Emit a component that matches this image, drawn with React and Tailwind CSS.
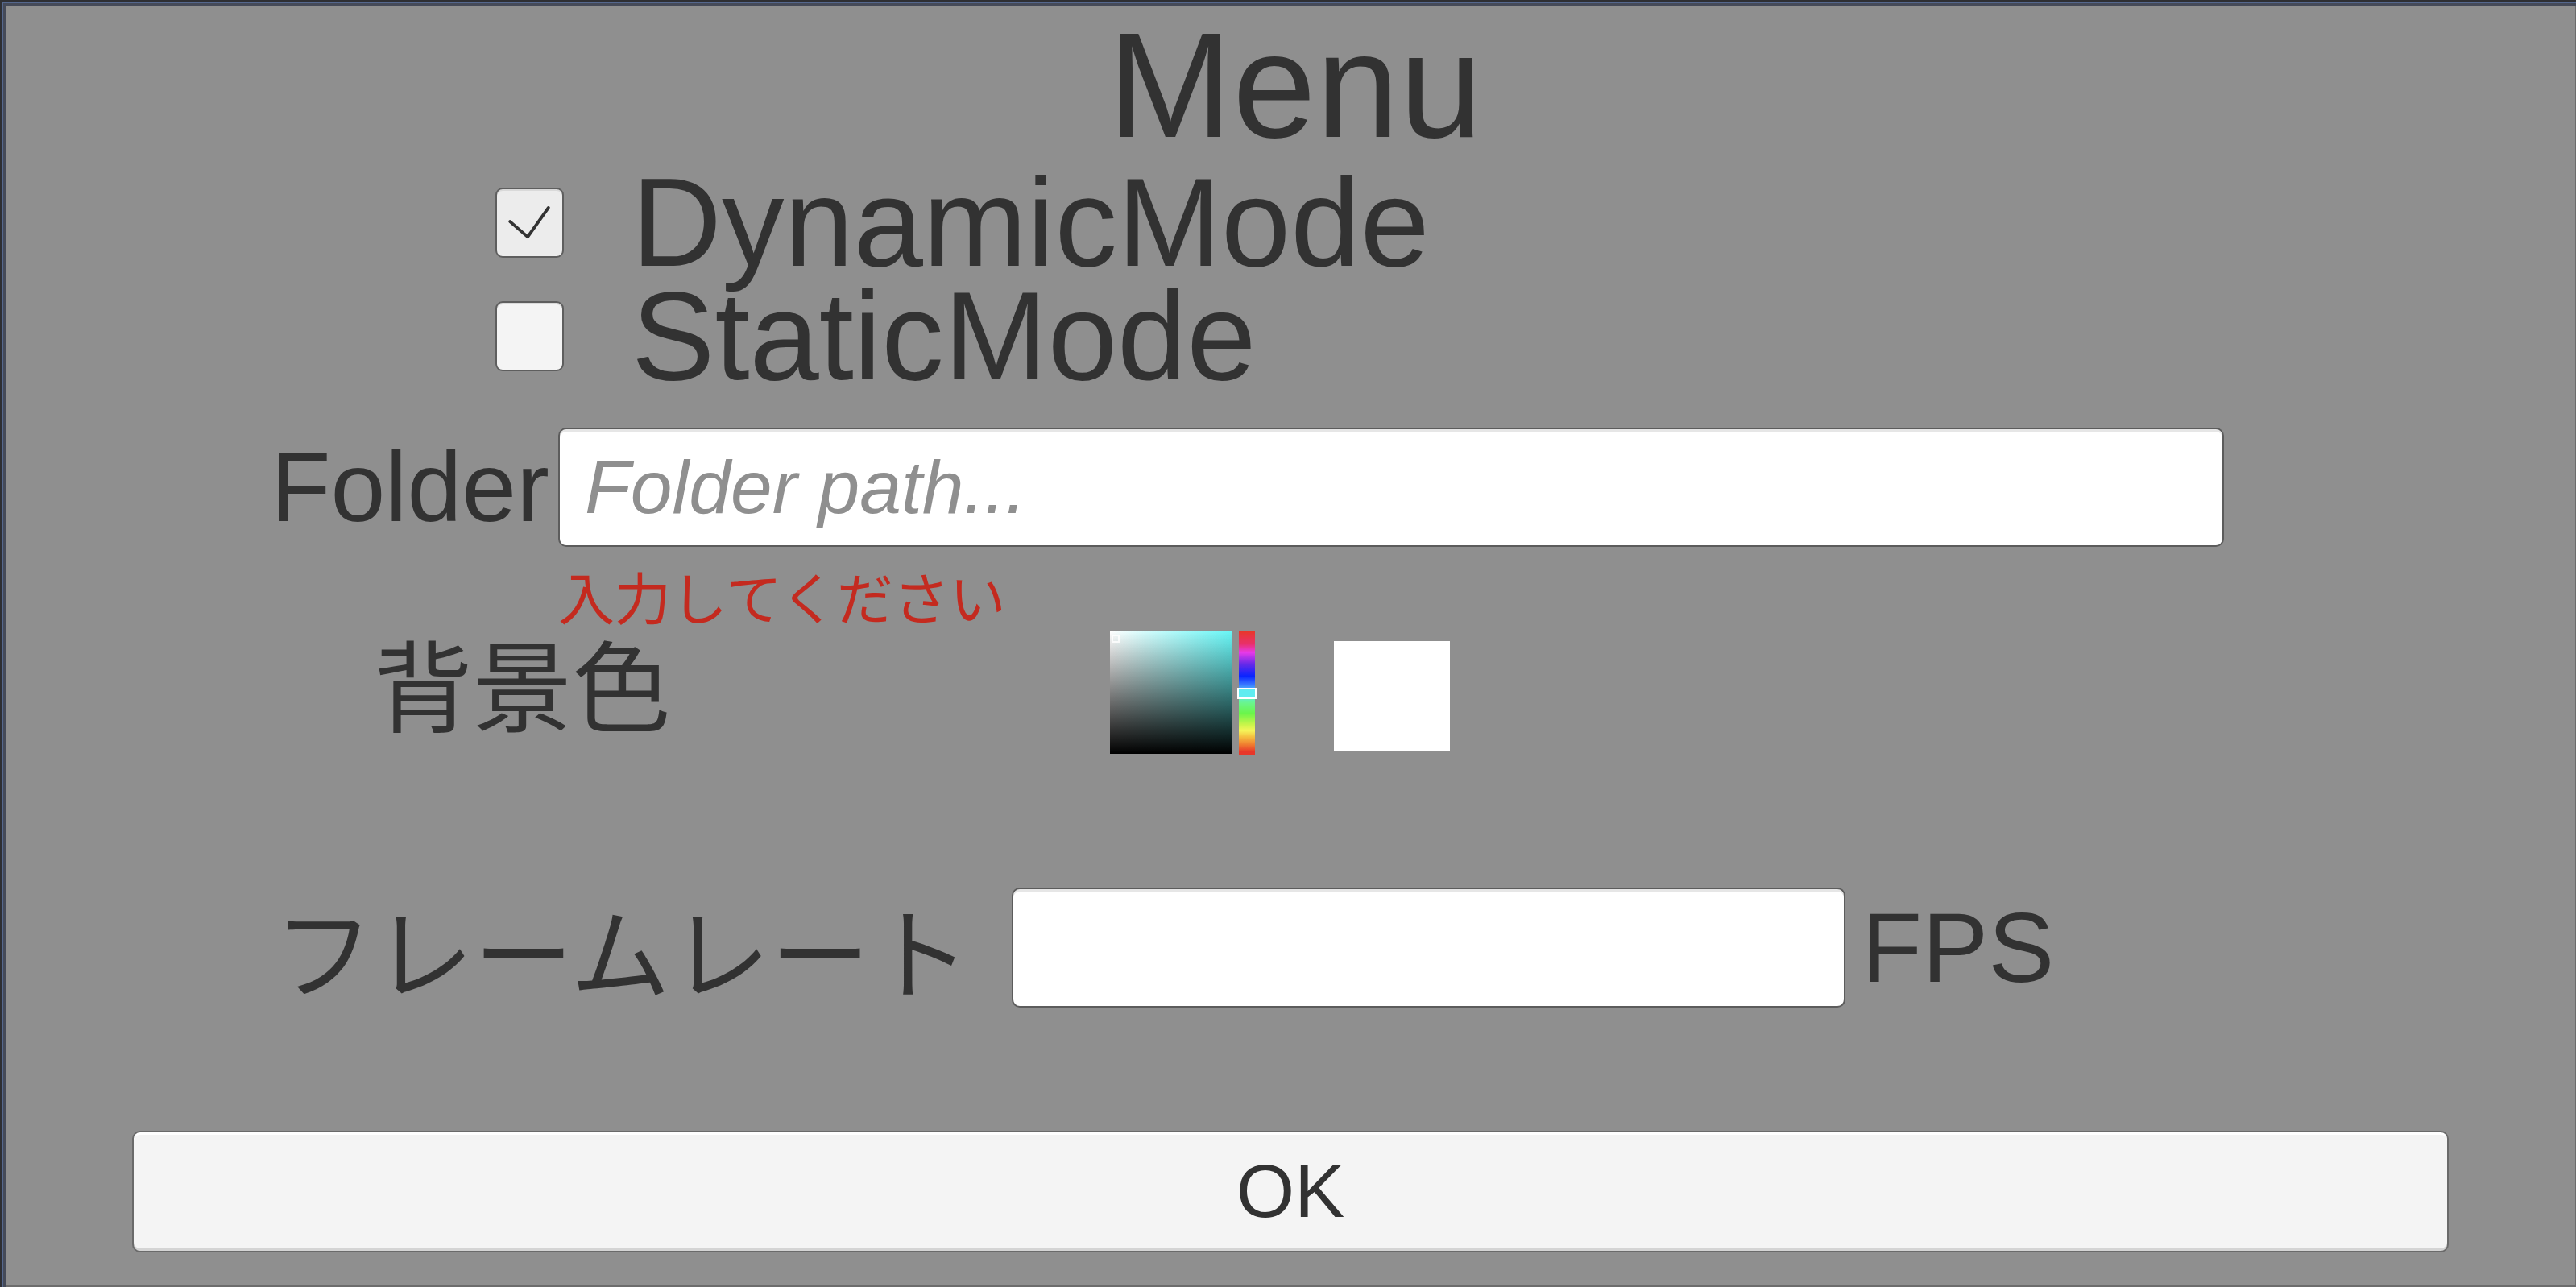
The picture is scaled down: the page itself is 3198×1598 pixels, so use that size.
import React, { useState } from "react";

const latin = "font-['Liberation_Sans','Noto_Sans_CJK_JP',sans-serif]";
const cjk = "font-['Noto_Sans_CJK_JP',sans-serif]";

function Check({ checked, onToggle }) {
  return (
    <button
      type="button"
      onClick={onToggle}
      className={`relative w-[85px] h-[87px] shrink-0 rounded-[9px] border-2 border-[#5e5e5e] shadow-[inset_0_2px_0_#d9d9d9] ${
        checked ? "bg-[#ececec]" : "bg-[#f4f4f4]"
      }`}
    >
      {checked && (
        <svg viewBox="0 0 85 87" className="absolute inset-0 w-full h-full">
          <polyline
            points="17,42 40,62 67,24"
            fill="none"
            stroke="#333"
            strokeWidth="4"
            strokeLinecap="round"
            strokeLinejoin="round"
          />
        </svg>
      )}
    </button>
  );
}

function ColorPicker() {
  return (
    <div className="flex items-start">
      <div className="relative w-[152px] h-[152px] bg-[linear-gradient(to_right,#ffffff,#66f5f5)]">
        <div className="absolute inset-0 bg-[linear-gradient(to_bottom,transparent,#000000)]" />
        <span className="absolute left-[2px] top-[4px] w-[10px] h-[10px] border-2 border-white/80" />
      </div>
      <div className="relative ml-[8px] w-[20px] h-[154px] bg-[linear-gradient(to_bottom,#e8372a_0%,#e8306a_10%,#e83ae8_17%,#6a2ae8_26%,#0a24ff_36%,#3a7aff_43%,#5ae8f5_50%,#6af58a_58%,#6af54a_66%,#c8f54a_75%,#f5f55a_80%,#f5c040_85%,#f08030_91%,#e8372a_97%)]">
        <span className="absolute left-[-2px] top-[70px] w-[24px] h-[14px] border-2 border-white bg-[#60ecf0]" />
      </div>
      <div className="ml-[98px] mt-[12px] w-[144px] h-[136px] bg-white" />
    </div>
  );
}

export default function App() {
  const [mode, setMode] = useState("dynamic");
  const [folder, setFolder] = useState("");
  const [fps, setFps] = useState("");

  return (
    <div className="w-[3198px] h-[1598px] bg-[#2e2f33] pt-[2px] pl-[2px]">
      <div className="w-full h-full border-t-2 border-l-2 border-[#55688e]">
        <div className="w-full h-full border-t-[3px] border-l-[3px] border-[#454a58]">
          <div
            className={`w-full h-full bg-[#8f8f8f] border-r border-b-2 border-[#6c6c6c] text-[#323232] ${latin}`}
          >
            <div className="pt-[8px] pl-[12px] text-center">
              <div className="h-[181px] leading-[181px] text-[186px]">Menu</div>
            </div>

            <div className="mt-[10px] pl-[608px]">
              <div className="flex items-center h-[141px]">
                <Check checked={mode === "dynamic"} onToggle={() => setMode("dynamic")} />
                <span className="ml-[84px] text-[155px] leading-[141px]">DynamicMode</span>
              </div>
              <div className="flex items-center h-[141px]">
                <Check checked={mode === "static"} onToggle={() => setMode("static")} />
                <span className="ml-[84px] text-[155px] leading-[141px]">StaticMode</span>
              </div>
            </div>

            <div className="mt-[43px] pl-[329px] flex items-center h-[148px]">
              <span className="w-[357px] text-[122px] leading-none">Folder</span>
              <input
                value={folder}
                onChange={(e) => setFolder(e.target.value)}
                placeholder="Folder path..."
                className={`w-[2068px] h-[148px] bg-white rounded-[10px] border-2 border-[#5c5c5c] shadow-[inset_0_3px_0_#e6e6e6] pl-[31px] text-[93px] italic text-[#323232] placeholder:text-[#8f8f8f] outline-none ${latin}`}
              />
            </div>

            <div className={`mt-[27px] pl-[686px] h-[68px] leading-[68px] text-[70px] text-[#c42a1f] ${cjk}`}>
              {folder ? "" : "入力してください"}
            </div>

            <div className="mt-[10px] pl-[457px] flex items-start">
              <span className={`w-[914px] h-[122px] leading-[122px] text-[123px] ${cjk}`}>背景色</span>
              <ColorPicker />
            </div>

            <div className="mt-[164px] pl-[333px] flex items-center h-[149px]">
              <span className={`w-[916px] text-[124px] leading-none ${cjk}`}>フレームレート</span>
              <input
                value={fps}
                onChange={(e) => setFps(e.target.value)}
                className={`w-[1035px] h-[149px] bg-white rounded-[10px] border-2 border-[#5c5c5c] shadow-[inset_0_3px_0_#e6e6e6] px-[28px] text-[93px] outline-none ${latin}`}
              />
              <span className="ml-[20px] text-[123px] leading-none">FPS</span>
            </div>

            <div className="mt-[153px] pl-[157px]">
              <button
                type="button"
                className={`w-[2876px] h-[151px] rounded-[10px] bg-[#f4f4f4] border-2 border-[#6a6a6a] shadow-[inset_0_3px_0_#ffffff,inset_0_-3px_0_#d4d4d4] text-[93px] text-[#323232] ${latin}`}
              >
                OK
              </button>
            </div>
          </div>
        </div>
      </div>
    </div>
  );
}
